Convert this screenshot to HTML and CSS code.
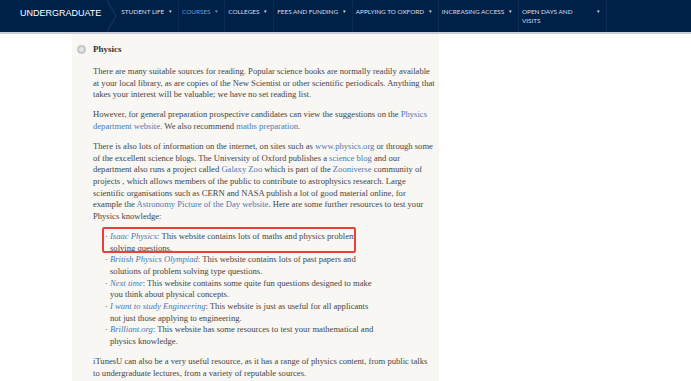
FILE: index.html
```html
<!DOCTYPE html>
<html lang="en">
<head>
    <meta charset="UTF-8">
    <meta name="viewport" content="width=device-width, initial-scale=1.0">
    <title>Undergraduate - Physics</title>
    <link rel="stylesheet" href="styles.css">
</head>
<body>
    <header class="site-header">
        <div class="brand">UNDERGRADUATE</div>
        <svg class="brand-sep" width="12" height="32" viewBox="0 0 12 32">
            <path d="M1 0 L10 16 L1 32" fill="none" stroke="#1c3b63" stroke-width="1"/>
        </svg>
        <nav class="main-nav">
            <a class="nav-item" href="#">STUDENT LIFE <span class="caret">&#9662;</span></a>
            <a class="nav-item active" href="#">COURSES <span class="caret">&#9662;</span></a>
            <a class="nav-item" href="#">COLLEGES <span class="caret">&#9662;</span></a>
            <a class="nav-item" href="#">FEES AND FUNDING <span class="caret">&#9662;</span></a>
            <a class="nav-item" href="#">APPLYING TO OXFORD <span class="caret">&#9662;</span></a>
            <a class="nav-item" href="#">INCREASING ACCESS <span class="caret">&#9662;</span></a>
            <a class="nav-item wide" href="#"><span class="nav-label">OPEN DAYS AND VISITS</span> <span class="caret">&#9662;</span></a>
        </nav>
    </header>

    <main class="panel">
        <h3 class="panel-title">
            <span class="toggle"></span>
            Physics
        </h3>
        <div class="panel-body">
            <p>There are many suitable sources for reading. Popular science books are normally readily available at your local library, as are copies of the New Scientist or other scientific periodicals. Anything that takes your interest will be valuable; we have no set reading list.</p>
            <p>However, for general preparation prospective candidates can view the suggestions on the <a href="#">Physics department website</a>. We also recommend <a href="#">maths preparation</a>.</p>
            <p>There is also lots of information on the internet, on sites such as <a href="#">www.physics.org</a> or through some of the excellent science blogs. The University of Oxford publishes a <a href="#">science blog</a> and our department also runs a project called <a href="#">Galaxy Zoo</a> which is part of the <a href="#">Zooniverse</a> community of projects , which allows members of the public to contribute to astrophysics research. Large scientific organisations such as CERN and NASA publish a lot of good material online, for example the <a href="#">Astronomy Picture of the Day website</a>. Here are some further resources to test your Physics knowledge:</p>
            <ul class="resources">
                <li class="marked"><em><a href="#">Isaac Physics</a></em>: This website contains lots of maths and physics problem solving questions.<span class="highlight"></span></li>
                <li><em><a href="#">British Physics Olympiad</a></em>: This website contains lots of past papers and solutions of problem solving type questions.</li>
                <li><em><a href="#">Next time</a></em>: This website contains some quite fun questions designed to make you think about physical concepts.</li>
                <li><em><a href="#">I want to study Engineering</a></em>: This website is just as useful for all applicants not just those applying to engineering.</li>
                <li><em><a href="#">Brilliant.org</a></em>: This website has some resources to test your mathematical and physics knowledge.</li>
            </ul>
            <p>iTunesU can also be a very useful resource, as it has a range of physics content, from public talks to undergraduate lectures, from a variety of reputable sources.</p>
        </div>
    </main>
</body>
</html>
```

FILE: styles.css
```css
body {
    margin: 0;
    background-color: #ffffff;
    font-family: "Liberation Serif", serif;
}
.site-header {
    display: flex;
    align-items: stretch;
    height: 32px;
    background-color: #002147;
    border-bottom: 2px solid #c9ced6;
}
.brand {
    padding: 0 5px 0 20px;
    line-height: 27px;
    color: #ffffff;
    font-family: "Liberation Sans", sans-serif;
    font-size: 9px;
}
.brand-sep {
    display: block;
}
.main-nav {
    display: flex;
}
.nav-item {
    display: flex;
    align-items: flex-start;
    padding: 8px 6px 0 3px;
    border-right: 1px solid #0b2a52;
    color: #d9dfe8;
    font-family: "Lato", sans-serif;
    font-size: 6.4px;
    text-decoration: none;
    white-space: pre;
}
.nav-item.active {
    color: #6d9fd4;
}
.nav-item.wide {
    width: 78px;
    justify-content: space-between;
    white-space: normal;
}
.nav-label {
    width: 60px;
    line-height: 9px;
    margin-top: -1px;
}
.caret {
    margin-left: 3px;
    font-size: 5px;
}
.panel {
    width: 358px;
    margin-left: 72px;
    padding: 9px 4px 10px 5px;
    background-color: #f8f7f3;
    color: #454545;
    font-size: 8.6px;
    line-height: 11.67px;
}
.panel-title {
    display: flex;
    align-items: center;
    gap: 7px;
    margin: 0 0 11px 0;
    color: #333333;
    font-size: 9px;
    line-height: 12px;
}
.toggle {
    width: 9px;
    height: 9px;
    border-radius: 50%;
    background: radial-gradient(circle, #e4e4e4 0 2px, #c6c6c6 2.5px);
}
.panel-body {
    padding-left: 16px;
}
.panel-body p {
    margin: 0 0 8.33px 0;
}
.panel-body a {
    color: #4a7ab5;
    text-decoration: none;
}
.resources {
    width: 267px;
    margin: 0 0 8.33px 0;
    padding-left: 17px;
}
.resources li {
    list-style: "\00B7\00A0";
}
.resources li.marked {
    position: relative;
}
.highlight {
    position: absolute;
    left: -8px;
    top: -4px;
    width: 250px;
    height: 22px;
    border: 2px solid #e8413b;
    border-radius: 2px;
}
```
